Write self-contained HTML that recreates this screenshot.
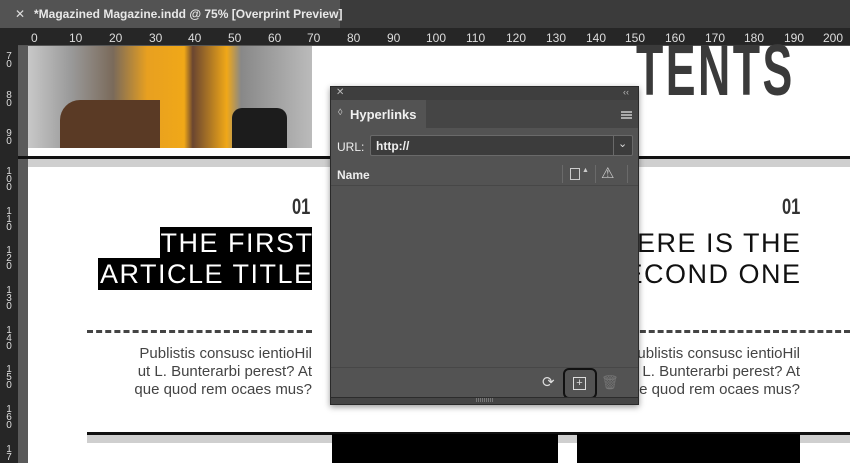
<!DOCTYPE html>
<html><head><style>
*{margin:0;padding:0;box-sizing:border-box}
body{width:850px;height:463px;overflow:hidden;background:#fff;font-family:"Liberation Sans",sans-serif;position:relative}
.a{position:absolute}
.rt{font-size:12px;color:#ddd;top:31px}
.lr{left:4px;font-size:10px;color:#ddd;line-height:8px;width:10px;text-align:center}
.t{font-size:27px;letter-spacing:1.5px;line-height:31px;text-align:right;white-space:nowrap}
.t span{margin-right:-1.5px}
.p{font-size:15px;color:#444;line-height:18px;text-align:right}
</style></head><body>
<div class="a" style="left:0;top:0;width:850px;height:28px;background:#3b3b3b"></div>
<div class="a" style="left:0;top:0;width:340px;height:28px;background:#535353"></div>
<div class="a" style="left:15px;top:7px;color:#ddd;font-size:12px">✕</div>
<div class="a" style="left:34px;top:7px;color:#e8e8e8;font-size:12px;font-weight:bold">*Magazined Magazine.indd @ 75% [Overprint Preview]</div>
<div class="a" style="left:0;top:28px;width:850px;height:18px;background:#262626;border-bottom:1px solid #555"></div>
<div class="a" style="left:0;top:28px;width:18px;height:435px;background:#262626"></div>
<div class="a" style="left:18px;top:46px;width:10px;height:417px;background:#5a5a5a"></div>
<div class="a rt" style="left:31px">0</div><div class="a rt" style="left:69px">10</div><div class="a rt" style="left:109px">20</div><div class="a rt" style="left:149px">30</div><div class="a rt" style="left:188px">40</div><div class="a rt" style="left:228px">50</div><div class="a rt" style="left:268px">60</div><div class="a rt" style="left:307px">70</div><div class="a rt" style="left:347px">80</div><div class="a rt" style="left:387px">90</div><div class="a rt" style="left:426px">100</div><div class="a rt" style="left:466px">110</div><div class="a rt" style="left:506px">120</div><div class="a rt" style="left:546px">130</div><div class="a rt" style="left:586px">140</div><div class="a rt" style="left:625px">150</div><div class="a rt" style="left:665px">160</div><div class="a rt" style="left:705px">170</div><div class="a rt" style="left:744px">180</div><div class="a rt" style="left:784px">190</div><div class="a rt" style="left:823px">200</div>
<div class="a lr" style="top:53px">7<br>0</div><div class="a lr" style="top:92px">8<br>0</div><div class="a lr" style="top:130px">9<br>0</div><div class="a lr" style="top:168px">1<br>0<br>0</div><div class="a lr" style="top:208px">1<br>1<br>0</div><div class="a lr" style="top:247px">1<br>2<br>0</div><div class="a lr" style="top:287px">1<br>3<br>0</div><div class="a lr" style="top:327px">1<br>4<br>0</div><div class="a lr" style="top:366px">1<br>5<br>0</div><div class="a lr" style="top:406px">1<br>6<br>0</div><div class="a lr" style="top:446px">1<br>7</div>
<div class="a" style="left:28px;top:46px;width:284px;height:102px;background:linear-gradient(90deg,#c8c8c8 0,#9a9a9a 15%,#7a6a5a 30%,#e8a020 42%,#f0a818 55%,#6b4630 58%,#f0a818 70%,#888 75%,#bbb 100%)"></div>
<div class="a" style="left:232px;top:108px;width:55px;height:40px;background:#1c1c1c;border-radius:10px 10px 0 0"></div>
<div class="a" style="left:60px;top:100px;width:100px;height:48px;background:#5a3a25;border-radius:20px 0 0 0"></div>
<div class="a" style="left:636px;top:30px;font-size:72px;font-weight:bold;color:#3a3a3a;transform:scaleX(0.62);transform-origin:left;letter-spacing:4px">TENTS</div>
<div class="a" style="left:18px;top:156px;width:832px;height:3px;background:#111"></div>
<div class="a" style="left:28px;top:159px;width:822px;height:8px;background:#cfcfcf"></div>
<div class="a" style="left:292px;top:194px;font-size:22px;font-weight:bold;color:#333;transform:scaleX(0.75);transform-origin:left">01</div>
<div class="a" style="left:160px;top:227px;width:152px;height:32px;background:#000"></div>
<div class="a" style="left:98px;top:258px;width:214px;height:32px;background:#000"></div>
<div class="a t" style="top:228px;right:538px;color:#fff"><span>THE FIRST</span><br><span>ARTICLE TITLE</span></div>
<div class="a" style="left:87px;top:330px;width:225px;border-top:3px dashed #444"></div>
<div class="a p" style="right:538px;top:345px">Publistis consusc ientioHil<br>ut L. Bunterarbi perest? At<br>que quod rem ocaes mus?</div>
<div class="a" style="left:782px;top:194px;font-size:22px;font-weight:bold;color:#333;transform:scaleX(0.75);transform-origin:left">01</div>
<div class="a t" style="top:228px;right:50px;color:#111"><span>HERE IS THE</span><br><span>SECOND ONE</span></div>
<div class="a" style="left:560px;top:330px;width:290px;border-top:3px dashed #444"></div>
<div class="a p" style="right:50px;top:345px">Publistis consusc ientioHil<br>ut L. Bunterarbi perest? At<br>que quod rem ocaes mus?</div>
<div class="a" style="left:87px;top:432px;width:763px;height:3px;background:#111"></div>
<div class="a" style="left:87px;top:435px;width:763px;height:8px;background:#cfcfcf"></div>
<div class="a" style="left:332px;top:434px;width:226px;height:29px;background:#000"></div>
<div class="a" style="left:577px;top:434px;width:223px;height:29px;background:#000"></div>
<div class="a" style="left:330px;top:86px;width:309px;height:319px;background:#535353;border:1px solid #2a2a2a;box-shadow:0 2px 6px rgba(0,0,0,.4)">
 <div class="a" style="left:0;top:0;width:307px;height:13px;background:#3e3e3e"></div>
 <div class="a" style="left:5px;top:0;color:#bbb;font-size:10px">✕</div>
 <div class="a" style="left:292px;top:0;color:#bbb;font-size:9px">‹‹</div>
 <div class="a" style="left:0;top:13px;width:307px;height:28px;background:#454545"></div>
 <div class="a" style="left:0;top:13px;width:95px;height:28px;background:#535353"></div>
 <div class="a" style="left:7px;top:20px;color:#ccc;font-size:9px">◊</div>
 <div class="a" style="left:19px;top:20px;color:#f0f0f0;font-size:13px;font-weight:bold">Hyperlinks</div>
 <div class="a" style="left:290px;top:24px;width:11px;height:8px;border-top:2px solid #aaa;border-bottom:2px solid #aaa"><div style="margin-top:1px;border-top:2px solid #aaa"></div></div>
 <div class="a" style="left:6px;top:53px;color:#eee;font-size:12px">URL:</div>
 <div class="a" style="left:39px;top:48px;width:263px;height:21px;background:#3c3c3c;border:1px solid #6a6a6a;border-radius:2px"></div>
 <div class="a" style="left:282px;top:48px;width:1px;height:21px;background:#6a6a6a"></div>
 <div class="a" style="left:287px;top:50px;color:#ddd;font-size:11px">⌄</div>
 <div class="a" style="left:45px;top:52px;color:#f0f0f0;font-size:12px;font-weight:bold">http://</div>
 <div class="a" style="left:0;top:98px;width:307px;height:1px;background:#474747"></div>
 <div class="a" style="left:6px;top:81px;color:#eee;font-size:12px;font-weight:bold">Name</div>
 <div class="a" style="left:231px;top:78px;width:1px;height:18px;background:#6a6a6a"></div>
 <div class="a" style="left:264px;top:78px;width:1px;height:18px;background:#6a6a6a"></div>
 <div class="a" style="left:296px;top:78px;width:1px;height:18px;background:#6a6a6a"></div>
 <div class="a" style="left:239px;top:81px;width:10px;height:12px;border:1px solid #ccc"></div>
 <div class="a" style="left:251px;top:80px;color:#ccc;font-size:7px">▲</div>
 <div class="a" style="left:270px;top:77px;color:#ccc;font-size:15px">⚠</div>
 <div class="a" style="left:0;top:280px;width:307px;height:1px;background:#474747"></div>
 <div class="a" style="left:211px;top:286px;color:#ddd;font-size:15px">⟳</div>
 <div class="a" style="left:232px;top:281px;width:34px;height:31px;border:2px solid #111;border-radius:6px"></div>
 <div class="a" style="left:242px;top:290px;width:13px;height:13px;border:1px solid #ddd;color:#ddd;font-size:11px;line-height:10px;text-align:center">+</div>
 <div class="a" style="left:270px;top:287px;color:#777;font-size:14px">🗑</div>
 <div class="a" style="left:0;top:310px;width:307px;height:7px;background:#454545;border-top:1px solid #2c2c2c"></div>
 <div class="a" style="left:145px;top:311px;width:18px;height:4px;background:repeating-linear-gradient(90deg,#777 0 1px,transparent 1px 2px)"></div>
</div>
</body></html>
